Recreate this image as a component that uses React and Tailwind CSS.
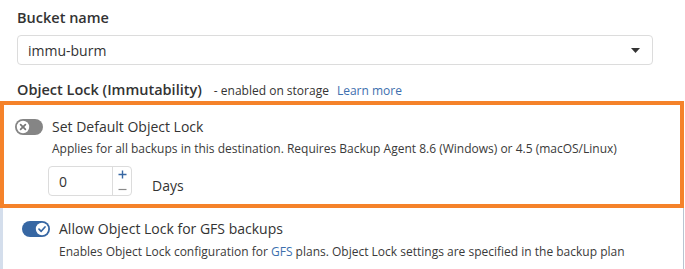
import React from 'react';

const ToggleOff = () => (
    <svg width="28" height="16" viewBox="0 0 28 16" className="shrink-0">
        <rect x="0" y="0" width="28" height="16" rx="8" fill="#858585" />
        <circle cx="8" cy="8" r="6.2" fill="#fff" />
        <path d="M5.6 5.6 L10.4 10.4 M10.4 5.6 L5.6 10.4" stroke="#777" strokeWidth="1.7" strokeLinecap="round" />
    </svg>
);

const ToggleOn = () => (
    <svg width="28" height="16" viewBox="0 0 28 16" className="shrink-0">
        <rect x="0" y="0" width="28" height="16" rx="8" fill="#3767a3" />
        <circle cx="20" cy="8" r="6.2" fill="#fff" />
        <path d="M17 8.2 L19.2 10.3 L23 6" stroke="#3767a3" strokeWidth="1.7" fill="none" strokeLinecap="round" strokeLinejoin="round" />
    </svg>
);

export default function App() {
    return (
        <div className="w-[685px] h-[269px] bg-white overflow-hidden font-['Open_Sans',sans-serif] text-[#333]">
            {/* Bucket name */}
            <div className="pl-[17px] pr-[32px] pt-[8px]">
                <div className="text-[14.5px] font-semibold leading-[20px]">Bucket name</div>
                <div className="mt-[7px] h-[30px] border border-[#dcdcdc] rounded-[4px] flex items-center justify-between pl-[10px] pr-[12px]">
                    <span className="text-[14px]">immu-burm</span>
                    <svg width="9" height="5" viewBox="0 0 9 5">
                        <path d="M0 0 L9 0 L4.5 5 Z" fill="#333" />
                    </svg>
                </div>
                <div className="mt-[15px] leading-[20px] flex items-baseline">
                    <span className="text-[14.5px] font-semibold">Object Lock (Immutability)</span>
                    <span className="text-[12px] ml-[12px]">- enabled on storage</span>
                    <a className="text-[12px] ml-[8px] text-[#3d6fae]">Learn more</a>
                </div>
            </div>

            {/* Default object lock (highlighted) */}
            <div className="w-[684px] border-4 border-[#f5822a] pl-[11px] pt-[12px] pb-[8px]">
                <div className="flex items-center h-[20px]">
                    <ToggleOff />
                    <span className="ml-[9px] text-[14px] leading-[20px]">Set Default Object Lock</span>
                </div>
                <div className="ml-[37px] mt-[3px] text-[12px] leading-[18px] text-[#3a3a3a]">
                    Applies for all backups in this destination. Requires Backup Agent 8.6 (Windows) or 4.5 (macOS/Linux)
                </div>
                <div className="ml-[33px] mt-[8px] flex items-start">
                    <div className="w-[84px] h-[30px] border border-[#dcdcdc] rounded-[4px] flex">
                        <div className="flex-1 flex items-center pl-[10px] text-[14px]">0</div>
                        <div className="w-[19px] border-l border-[#dcdcdc] flex flex-col">
                            <div className="flex-1 flex items-center justify-center">
                                <svg width="9" height="9" viewBox="0 0 9 9">
                                    <path d="M4.5 0.5 V8.5 M0.5 4.5 H8.5" stroke="#3767a3" strokeWidth="1.4" />
                                </svg>
                            </div>
                            <div className="flex-1 flex items-center justify-center">
                                <svg width="9" height="9" viewBox="0 0 9 9">
                                    <path d="M0.5 5.5 H8.5" stroke="#8a8a8a" strokeWidth="1.2" />
                                </svg>
                            </div>
                        </div>
                    </div>
                    <span className="ml-[20px] mt-[10px] text-[14px] leading-[20px]">Days</span>
                </div>
            </div>

            {/* GFS */}
            <div className="w-[684px] h-[70px] border-l-[3px] border-l-[#d4deec] border-r border-r-[#b9c4d1] pl-[19px] pt-[11px]">
                <div className="flex items-center h-[20px]">
                    <ToggleOn />
                    <span className="ml-[9px] text-[14px] leading-[20px]">Allow Object Lock for GFS backups</span>
                </div>
                <div className="ml-[37px] mt-[4px] text-[12px] leading-[18px] text-[#3a3a3a]">
                    Enables Object Lock configuration for <span className="text-[#3d6fae]">GFS</span> plans. Object Lock settings are specified in the backup plan
                </div>
            </div>
        </div>
    );
}
